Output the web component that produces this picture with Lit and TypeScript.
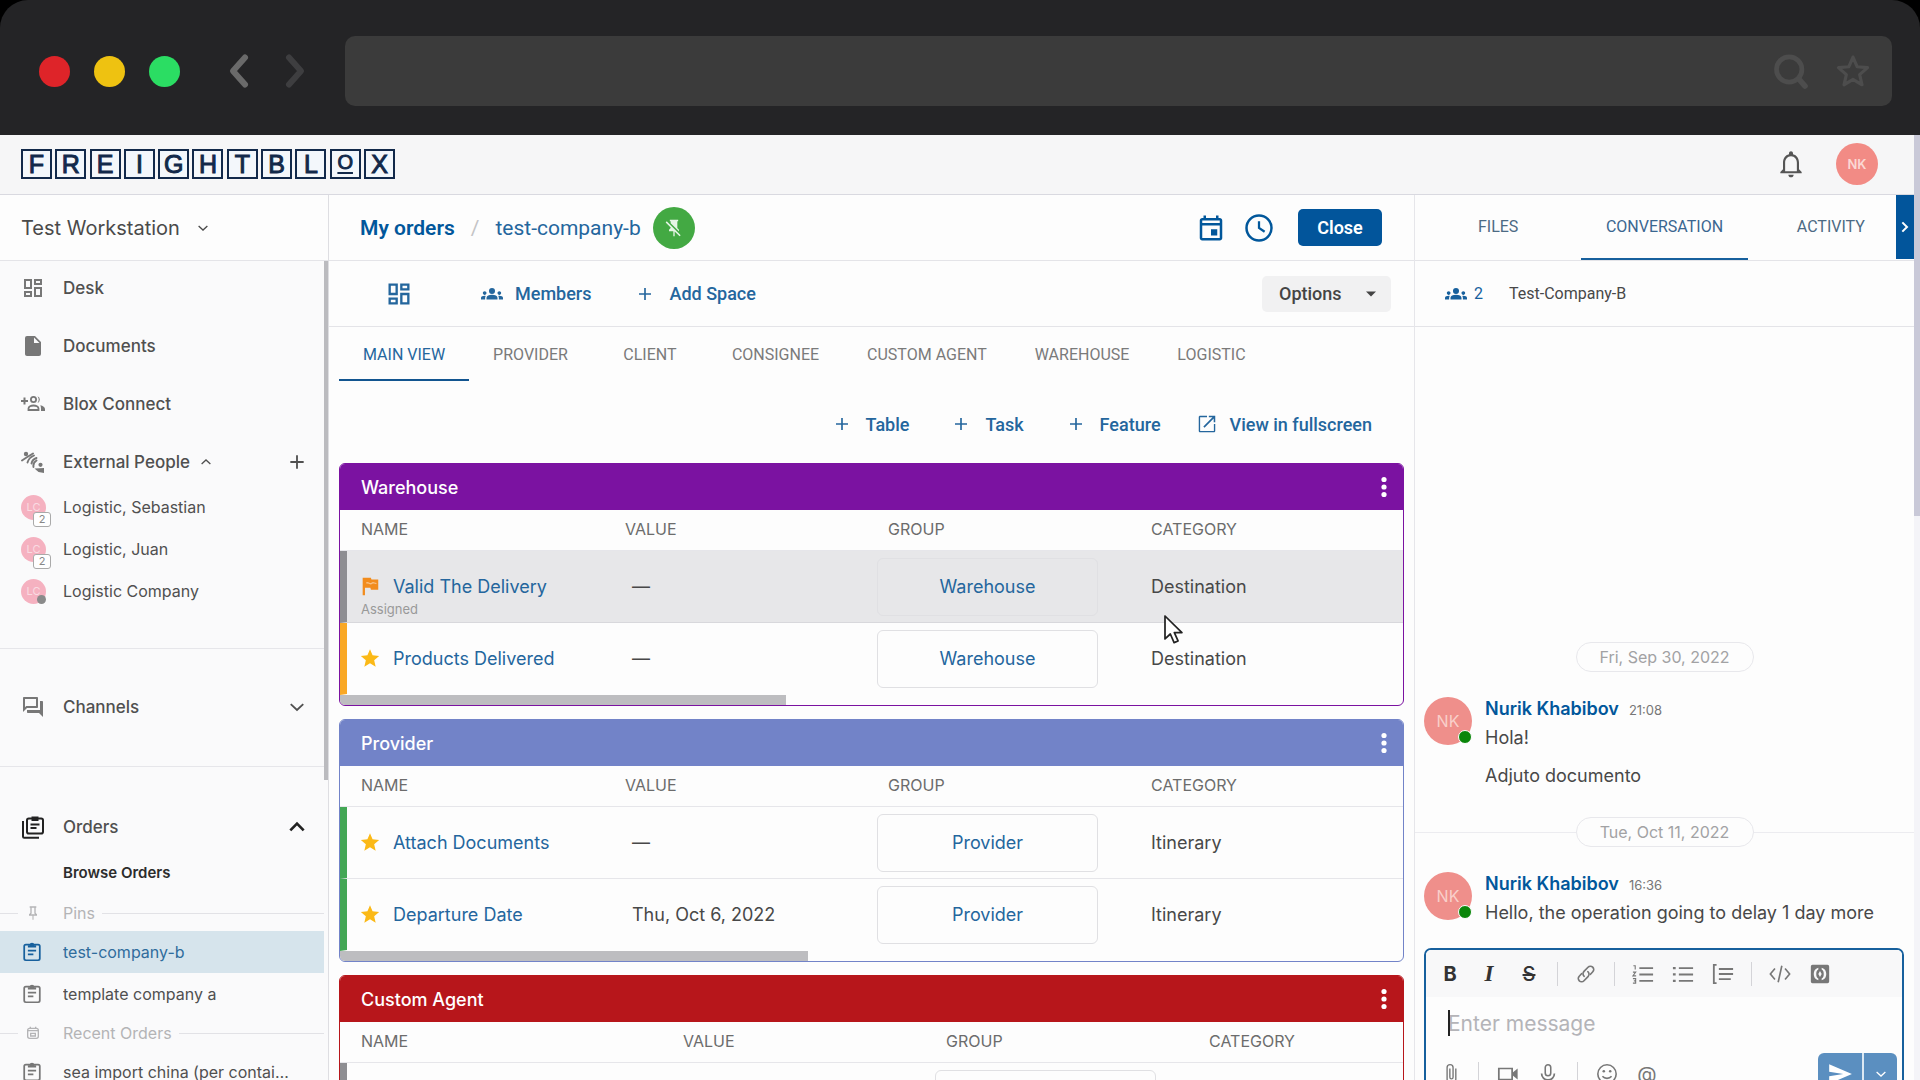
import { LitElement, html, svg, css, nothing, TemplateResult } from "lit";
import { customElement, property } from "lit/decorators.js";
import { classMap } from "lit/directives/class-map.js";

const shapes: Record<string, TemplateResult> = {
  back: svg`<path d="M16 3 8 12l8 9" fill="none" stroke="currentColor" stroke-width="4" stroke-linecap="round" stroke-linejoin="round"/>`,
  forward: svg`<path d="m8 3 8 9-8 9" fill="none" stroke="currentColor" stroke-width="4" stroke-linecap="round" stroke-linejoin="round"/>`,
  search: svg`<circle cx="11.500" cy="11" r="8" fill="none" stroke="currentColor" stroke-width="3"/><path d="m17.500 17 4 4.500" stroke="currentColor" stroke-width="3.500" stroke-linecap="round"/>`,
  starLine: svg`<path d="m12 3.200 2.600 6.100 6.600.6-5 4.400 1.500 6.400L12 17.300l-5.700 3.400 1.500-6.400-5-4.400 6.600-.6z" fill="none" stroke="currentColor" stroke-width="2" stroke-linejoin="round"/>`,
  bell: svg`<path d="M12 22c1.1 0 2-.9 2-2h-4c0 1.1.9 2 2 2zm6-6v-5c0-3.07-1.63-5.64-4.5-6.32V4c0-.83-.67-1.5-1.5-1.5s-1.5.67-1.5 1.5v.68C7.64 5.36 6 7.92 6 11v5l-2 2v1h16v-1l-2-2zm-1.600 1.400H7.600v-6.400c0-2.600 1.700-4.900 4.400-4.900s4.400 2.300 4.400 4.900v6.400z"/>`,
  down: svg`<path d="m4.500 8.500 7.500 7 7.500-7" fill="none" stroke="currentColor" stroke-width="2.200"/>`,
  up: svg`<path d="m4.500 15.500 7.500-7 7.500 7" fill="none" stroke="currentColor" stroke-width="2.200"/>`,
  upBold: svg`<path d="m4 16 8-8 8 8" fill="none" stroke="currentColor" stroke-width="3.200"/>`,
  right: svg`<path d="m8 5 7 7-7 7" fill="none" stroke="currentColor" stroke-width="3"/>`,
  caret: svg`<path d="m2 7 10 10L22 7z"/>`,
  plus: svg`<path d="M12 4v16M4 12h16" stroke="currentColor" stroke-width="2.200"/>`,
  dashboard: svg`<path d="M19 5v2h-4V5h4M9 5v6H5V5h4m10 8v6h-4v-6h4M9 17v2H5v-2h4M21 3h-8v6h8V3zM11 3H3v10h8V3zm10 8h-8v10h8V11zm-10 4H3v6h8v-6z"/>`,
  file: svg`<path d="M6 2a2 2 0 0 0-2 2v16c0 1.100.9 2 2 2h12a2 2 0 0 0 2-2V8l-6-6H6zm7 7V3.500L18.500 9H13z"/>`,
  addPeople: svg`<path d="M0 9h7M3.500 5.500v7" stroke="currentColor" stroke-width="2"/><circle cx="12.500" cy="7.500" r="2.600" fill="none" stroke="currentColor" stroke-width="1.800"/><path d="M7.500 18v-1.500c0-1.800 2.500-3 5-3s5 1.200 5 3V18z" fill="none" stroke="currentColor" stroke-width="1.800"/><path d="M16.500 4.300a3.500 3.500 0 0 1 0 6.600 5.500 5.500 0 0 0 0-6.600zM19.300 13.200c2.700.6 4.700 1.900 4.700 3.800v2h-4v-2.300c0-1.400-.3-2.500-.7-3.500z"/>`,
  external: svg`<circle cx="5" cy="4" r="2.200"/><path d="M1 10.500 5.500 7.500 12 3.500M6.500 12.500c1-3.500 3-5.500 6.500-7M10.500 13.500c.5-2.500 2-4.500 5-5.500M12.500 17c-.5-2.800.5-5 3-6.500" fill="none" stroke="currentColor" stroke-width="1.900" stroke-linecap="round"/><circle cx="19.500" cy="14.800" r="2.100"/><path d="M13.500 18.500 23 18v5l-5.500-1z"/>`,
  forum: svg`<path d="M15 4v7H5.170L4 12.170V4h11m1-2H3c-.55 0-1 .45-1 1v14l4-4h10c.55 0 1-.45 1-1V3c0-.55-.45-1-1-1zm5 4h-2v9H6v2c0 .55.450 1 1 1h11l4 4V7c0-.55-.45-1-1-1z"/>`,
  orders: svg`<rect x="6" y="3.500" width="16" height="15" rx="1.800" fill="none" stroke="currentColor" stroke-width="2"/><path d="M10.500 1.500h7V6h-7z"/><path d="M9.500 9.500h9M9.500 13h6M2 6v15.500c0 .8.400 1.200 1.200 1.200H18" fill="none" stroke="currentColor" stroke-width="2"/>`,
  clipboard: svg`<rect x="3.500" y="4" width="17" height="17" rx="1.800" fill="none" stroke="currentColor" stroke-width="1.900"/><path d="M7.500 7V4.500h2a2.500 2.500 0 0 1 5 0h2V7z"/><path d="M7.500 10.500h9M7.500 14.500h6" stroke="currentColor" stroke-width="1.900"/>`,
  calendarSmall: svg`<rect x="4" y="5" width="16" height="15" rx="3" fill="none" stroke="currentColor" stroke-width="2"/><path d="M4 8.500h16M8 2.500V6M16 2.500V6M8.500 12.500h7v4h-7z" fill="none" stroke="currentColor" stroke-width="2"/>`,
  pin: svg`<path d="M16 12V4h1V2H7v2h1v8l-2 2v2h5.200v6h1.600v-6H18v-2l-2-2M8.800 14l1.200-1.200V4h4v8.800l1.200 1.200H8.800z"/>`,
  pinOff: svg`<path d="M2 5.270 3.280 4 20 20.720 18.730 22l-5.930-5.930V22h-1.600v-6H6v-2l2-2v-.73l-6-6M16 12l2 2v2h-.18L8 6.180V4H7V2h10v2h-1v8z"/>`,
  event: svg`<path d="M19 4h-1V2h-2v2H8V2H6v2H5c-1.110 0-1.990.9-1.990 2L3 20c0 1.100.89 2 2 2h14c1.100 0 2-.9 2-2V6c0-1.100-.9-2-2-2zm0 16H5V10h14v10zm0-12H5V6h14v2zm-7 5h5v5h-5z"/>`,
  clock: svg`<circle cx="12" cy="12" r="10" fill="none" stroke="currentColor" stroke-width="2"/><path d="M12 6.500V12l4.500 3" fill="none" stroke="currentColor" stroke-width="1.800"/>`,
  groups: svg`<path d="M12 12.750c1.630 0 3.070.39 4.240.9 1.080.48 1.760 1.560 1.760 2.730V18H6v-1.610c0-1.180.68-2.260 1.760-2.730 1.170-.52 2.610-.91 4.240-.91zM4 13c1.100 0 2-.9 2-2s-.9-2-2-2-2 .9-2 2 .9 2 2 2zm1.130 1.100C4.760 14.040 4.390 14 4 14c-.99 0-1.930.21-2.780.58C.48 14.900 0 15.620 0 16.430V18h4.500v-1.610c0-.83.230-1.610.63-2.290zM20 13c1.100 0 2-.9 2-2s-.9-2-2-2-2 .9-2 2 .9 2 2 2zm4 3.430c0-.81-.48-1.530-1.220-1.850-.85-.37-1.790-.58-2.780-.58-.39 0-.76.04-1.130.1.400.68.630 1.460.63 2.290V18H24v-1.570zM12 5.500a3.300 3.300 0 1 1 0 6.600 3.300 3.300 0 0 1 0-6.600z"/>`,
  open: svg`<path d="M19.500 19.500h-15v-15H12V3H4.500C3.700 3 3 3.700 3 4.500v15c0 .8.700 1.500 1.500 1.500h15c.8 0 1.500-.7 1.500-1.500V12h-1.500v7.500zM14 3v1.700h4L8 14.700 9.300 16l10-10v4H21V3h-7z"/>`,
  flag: svg`<path d="M4 3h9l.6 2H21v11h-8l-.6-2H6.500v8H4z"/><path d="M8 9c2-2 4 2 6 0s3 1 5 0" fill="none" stroke="#fff" stroke-opacity=".45" stroke-width="1.500"/>`,
  star: svg`<path d="M12 17.770 18.180 21.500l-1.640-7.030L22 9.740l-7.190-.61L12 2.500 9.190 9.130 2 9.740l5.460 4.730L5.820 21.500z"/>`,
  kebab: svg`<circle cx="12" cy="4.500" r="2.600"/><circle cx="12" cy="12" r="2.600"/><circle cx="12" cy="19.500" r="2.600"/>`,
  link: svg`<g fill="none" stroke="currentColor" stroke-width="1.800" stroke-linecap="round"><path d="M10 14.500c-1.700-1.500-1.700-3.700-.2-5.300l4.400-4.600a3.600 3.600 0 0 1 5.200 5l-2.500 2.700"/><path d="M14 9.500c1.700 1.500 1.700 3.700.2 5.300l-4.400 4.600a3.600 3.600 0 0 1-5.200-5l2.500-2.700"/></g>`,
  ordered: svg`<path d="M8 5.500h15M8 12.500h15M8 19.500h15" stroke="currentColor" stroke-width="2"/><path d="M1.500 3h2v4M1 10h3l-3 4h3.500M1 17h3v5H1M2 19.500h2" fill="none" stroke="currentColor" stroke-width="1.200"/>`,
  bullets: svg`<path d="M7.500 5.500h15.500M7.500 12.500h15.500M7.500 19.500h15.500" stroke="currentColor" stroke-width="2"/><path d="M1 5.500h3M1 12.500h3M1 19.500h3" stroke="currentColor" stroke-width="2.400"/>`,
  quote: svg`<path d="M5 2H2v20h3M7.500 6.500H23M7.500 12H23M7.500 17.500h13" fill="none" stroke="currentColor" stroke-width="2"/>`,
  code: svg`<path d="m6.500 6-5 6 5 6M17.500 6l5 6-5 6M14 3l-4 18" fill="none" stroke="currentColor" stroke-width="1.800"/>`,
  block: svg`<path fill-rule="evenodd" d="M3 1h18a2 2 0 0 1 2 2v18a2 2 0 0 1-2 2H3a2 2 0 0 1-2-2V3a2 2 0 0 1 2-2zm7 3.500C6 5.500 4.500 8.500 4.500 12S6 18.500 10 19.500v-2.200C8 16.500 7.500 14.500 7.500 12S8 7.500 10 6.700zm4 0v2.200c2 .8 2.500 2.800 2.500 5.300s-.5 4.500-2.500 5.300v2.200c4-1 5.500-4 5.500-7.500S18 5.500 14 4.500zM12 8.500l-2 3.500 2 3.500 2-3.500z"/>`,
  clip: svg`<path d="M16.500 6v11.500a4 4 0 0 1-8 0V5a2.500 2.500 0 0 1 5 0v10.500a1 1 0 0 1-2 0V6H10v9.500a2.500 2.500 0 0 0 5 0V5a4 4 0 0 0-8 0v12.500a5.500 5.500 0 0 0 11 0V6h-1.500z"/>`,
  video: svg`<path d="M2 6h14.500v12H2z" fill="none" stroke="currentColor" stroke-width="1.900"/><path d="m16.500 11 6-5v12l-6-5z"/>`,
  mic: svg`<rect x="9" y="2" width="6" height="12" rx="3" fill="none" stroke="currentColor" stroke-width="1.700"/><path d="M5 11.500a7 7 0 0 0 14 0M12 18.500V22" fill="none" stroke="currentColor" stroke-width="1.900"/>`,
  smile: svg`<circle cx="12" cy="12" r="10" fill="none" stroke="currentColor" stroke-width="1.700"/><circle cx="8.500" cy="9" r="1.400"/><circle cx="15.500" cy="9" r="1.400"/><path d="M7 14.500c2.500 3 7.500 3 10 0" fill="none" stroke="currentColor" stroke-width="1.700"/>`,
  send: svg`<path d="M2 21 23 12 2 3v7l13 2-13 2z"/>`,
  pointer: svg`<path d="M4.500 1.500v17.200l4-3.700 2.800 6.500 3-1.300-2.800-6.300h5.700z" fill="#fff" stroke="#222" stroke-width="1.300" stroke-linejoin="round"/>`,
};

const icon = (name: string, size = 24) => svg`
  <svg class="icon" viewBox="0 0 24 24" width=${size} height=${size} fill="currentColor" aria-hidden="true">${shapes[name]}</svg>`;

const base = css`
  * { box-sizing: border-box; }
  button, input, textarea { font: inherit; color: inherit; margin: 0; }
  button { border: 0; background: none; padding: 0; cursor: pointer; }
  a { color: inherit; text-decoration: none; }
  .icon { display: block; flex: none; }
`;

interface Row { stripe: string; icon?: string; tone?: string; name?: string; note?: string; value?: string; group?: string; category?: string; hover?: boolean; }
interface Board { title: string; tone: string; thumb: number; wide?: boolean; rows: Row[]; }

const boards: Board[] = [
  { title: "Warehouse", tone: "purple", thumb: 42, rows: [
    { icon: "flag", tone: "orange", stripe: "grey", name: "Valid The Delivery", note: "Assigned", value: "—", group: "Warehouse", category: "Destination", hover: true },
    { icon: "star", tone: "gold", stripe: "amber", name: "Products Delivered", value: "—", group: "Warehouse", category: "Destination" },
  ] },
  { title: "Provider", tone: "indigo", thumb: 44, rows: [
    { icon: "star", tone: "gold", stripe: "green", name: "Attach Documents", value: "—", group: "Provider", category: "Itinerary" },
    { icon: "star", tone: "gold", stripe: "green", name: "Departure Date", value: "Thu, Oct 6, 2022", group: "Provider", category: "Itinerary" },
  ] },
  { title: "Custom Agent", tone: "red", thumb: 40, wide: true, rows: [{ stripe: "grey" }] },
];

@customElement("order-board")
class OrderBoard extends LitElement {
  @property({ attribute: false }) board!: Board;

  static styles = [base, css`
    :host { display: block; }
    .card { border: 1px solid var(--tone); border-radius: 6px; overflow: hidden; background: #fdfdfd; }
    .purple { --tone: #7b12a1; }
    .indigo { --tone: #7283c8; }
    .red { --tone: #b7161b; }
    .head { display: flex; align-items: center; justify-content: space-between; height: 46px; padding: 0 9px 0 21px; background: var(--tone); color: #fff; }
    h2 { margin: 0; font-size: 18px; font-weight: 500; }
    .menu { display: grid; place-items: center; width: 22px; height: 32px; }
    table { width: 100%; border-collapse: separate; border-spacing: 0; table-layout: fixed; }
    .c-name { width: 264px; }
    .wide .c-name { width: 322px; }
    .c-mid { width: 263px; }
    th { height: 41px; padding: 0 0 2px 21px; text-align: left; font-size: 16px; font-weight: 400; color: #6c6c6c; border-bottom: 1px solid #e6e6ea; }
    td { height: 72px; padding: 0 0 0 21px; font-size: 18px; color: #484848; border-bottom: 1px solid #e6e6ea; }
    tr:last-child td { border-bottom-color: transparent; }
    .hover td { background: #e7e7e9; border-bottom-color: #d8d8dc; }
    .first { padding: 0 0 0 12px; border-left: 7px solid var(--stripe); }
    .s-grey { --stripe: #8e8e92; }
    .s-amber { --stripe: #f9a825; }
    .s-green { --stripe: #43a755; }
    .name { display: grid; grid-template-columns: 22px 1fr; column-gap: 12px; grid-template-rows: 28px 18px; align-items: center; padding: 21px 0 4px; color: #24669d; }
    .note { grid-column: 1 / 3; padding-left: 2px; font-size: 13px; color: #999; }
    .orange { color: #f28c1d; }
    .gold { color: #fbb917; }
    .value { padding-left: 28px; }
    .pick { padding: 0 32px 0 10px; }
    .group { display: block; width: 100%; height: 58px; border: 1px solid #e0e0e3; border-radius: 6px; color: #24669d; font-size: 18px; }
    .track { height: 10px; }
    .thumb { height: 100%; background: #bdbdc0; }
  `];

  render() {
    const b = this.board;
    return html`
      <section class="card ${classMap({ [b.tone]: true, wide: !!b.wide })}">
        <header class="head"><h2>${b.title}</h2><button class="menu" aria-label="${b.title} menu">${icon("kebab", 24)}</button></header>
        <table>
          <colgroup><col class="c-name" /><col class="c-mid" /><col class="c-mid" /><col /></colgroup>
          <thead><tr><th>NAME</th><th>VALUE</th><th>GROUP</th><th>CATEGORY</th></tr></thead>
          <tbody>
            ${b.rows.map((r) => html`
              <tr class=${classMap({ hover: !!r.hover })}>
                <td class="first s-${r.stripe}">
                  ${r.name ? html`<div class="name"><span class=${r.tone ?? ""}>${icon(r.icon ?? "star", 22)}</span><a href="#">${r.name}</a>${r.note ? html`<span class="note">${r.note}</span>` : nothing}</div>` : nothing}
                </td>
                <td class="value">${r.value}</td>
                <td class="pick"><button class="group">${r.group}</button></td>
                <td>${r.category}</td>
              </tr>`)}
          </tbody>
        </table>
        <div class="track"><div class="thumb" style="width:${b.thumb}%"></div></div>
      </section>`;
  }
}

@customElement("side-nav")
class SideNav extends LitElement {
  static styles = [base, css`
    :host { display: flex; flex-direction: column; min-height: 0; background: #fafafb; color: #505050; }
    .station { display: flex; align-items: center; gap: 16px; width: 100%; height: 66px; flex: none; padding: 0 21px; border-bottom: 1px solid #e4e4e8; background: #fdfdfd; font-size: 20px; color: #4a4a4a; }
    .body { display: flex; flex: 1; min-height: 0; }
    .list { flex: 1; min-width: 0; overflow: hidden; }
    .bar { width: 4px; height: 519px; background: #bbbbbf; }
    .top { display: grid; gap: 12px; padding: 4px 0 1px; }
    .item { display: grid; grid-template-columns: 42px 1fr auto; align-items: center; height: 46px; padding: 0 17px 0 21px; font-size: 17px; font-weight: 500; }
    .label { display: flex; align-items: center; gap: 9px; }
    .side { display: grid; place-items: center; width: 20px; height: 20px; }
    .sub { display: grid; grid-template-columns: 42px 1fr; align-items: center; height: 42px; padding: 0 34px 0 21px; font-size: 16px; }
    .ellipsis { overflow: hidden; text-overflow: ellipsis; white-space: nowrap; }
    .avatar { position: relative; display: grid; place-items: center; width: 25px; height: 25px; border-radius: 50%; background: #f5b1c0; color: #f9dbe2; font-size: 11px; }
    .count { position: absolute; left: 12px; top: 17px; width: 18px; height: 15px; border: 1px solid #aaa; border-radius: 3px; background: #fff; color: #888; font-size: 11px; line-height: 13px; text-align: center; }
    .dot { position: absolute; left: 16px; top: 16px; width: 9px; height: 9px; border-radius: 50%; background: #8a8a8a; }
    .people { padding-bottom: 36px; }
    .section { border-top: 1px solid #e6e6ea; padding: 35px 0 36px; }
    .orders { padding-top: 37px; }
    .dark { color: #222; }
    .browse { height: 45px; display: flex; align-items: center; padding-left: 63px; font-size: 15px; font-weight: 600; color: #2c2c2c; }
    .rule { display: grid; grid-template-columns: 18px 16px auto 1fr; align-items: center; height: 36px; column-gap: 7px; font-size: 16px; color: #b4b4b6; }
    .rule .line { height: 1px; background: #e2e2e6; }
    .rule .title { margin-left: 15px; }
    .active { background: #d6e4ec; color: #2f6c9c; }
    .grey { color: #777; }
    .active .grey { color: #17609d; }
  `];

  private sub(label: string, active = false) {
    return html`<a href="#" class="sub ${classMap({ active })}"><span class="grey">${icon("clipboard", 22)}</span><span class="ellipsis">${label}</span></a>`;
  }

  private rule(name: string, label: string) {
    return html`<div class="rule"><span class="line"></span>${icon(name, 16)}<span class="title">${label}</span><span class="line"></span></div>`;
  }

  render() {
    return html`
      <button class="station">Test Workstation ${icon("down", 14)}</button>
      <div class="body">
        <nav class="list">
          <div class="top">
            <a href="#" class="item"><span class="grey">${icon("dashboard", 24)}</span>Desk</a>
            <a href="#" class="item"><span class="grey">${icon("file", 24)}</span>Documents</a>
            <a href="#" class="item"><span class="grey">${icon("addPeople", 24)}</span>Blox Connect</a>
            <div class="item"><span class="grey">${icon("external", 24)}</span><span class="label">External People ${icon("up", 14)}</span><button class="side" aria-label="Add person">${icon("plus", 20)}</button></div>
          </div>
          <div class="people">
            ${["Logistic, Sebastian", "Logistic, Juan", "Logistic Company"].map((p, i) => html`
              <a href="#" class="sub"><span class="avatar">LC${i < 2 ? html`<span class="count">2</span>` : html`<span class="dot"></span>`}</span><span>${p}</span></a>`)}
          </div>
          <section class="section"><div class="item"><span class="grey">${icon("forum", 24)}</span>Channels<button class="side" aria-label="Expand channels">${icon("down", 20)}</button></div></section>
          <section class="section orders">
            <div class="item"><span class="dark">${icon("orders", 24)}</span>Orders<button class="side dark" aria-label="Collapse orders">${icon("upBold", 20)}</button></div>
            <a href="#" class="browse">Browse Orders</a>
            ${this.rule("pin", "Pins")}
            ${this.sub("test-company-b", true)}
            ${this.sub("template company a")}
            ${this.rule("calendarSmall", "Recent Orders")}
            ${this.sub("sea import china (per container)")}
          </section>
        </nav>
        <div class="bar"></div>
      </div>`;
  }
}

@customElement("order-view")
class OrderView extends LitElement {
  static styles = [base, css`
    :host { display: block; min-width: 0; overflow: hidden; border-left: 1px solid #dedee2; border-right: 1px solid #e6e6ea; background: #fdfdfd; color: #24669d; }
    .bar, .commands, .tabs, .actions { font-family: Roboto, Inter, sans-serif; }
    .bar { display: flex; align-items: center; height: 66px; border-bottom: 1px solid #e4e4e8; padding: 0 32px 0 31px; font-size: 21px; }
    .parent { font-weight: 600; color: #01579b; }
    .slash { padding: 0 16px; color: #c4c4c6; }
    .pin { display: grid; place-items: center; width: 42px; height: 42px; margin-left: 12px; border-radius: 50%; background: #43a943; color: #e6f5e6; }
    .tools { display: flex; align-items: center; gap: 18px; margin-left: auto; color: #01579b; }
    .close { width: 84px; height: 37px; margin-left: 6px; border-radius: 5px; background: #02559b; color: #fff; font-size: 18px; font-weight: 600; }
    .commands { display: flex; align-items: center; height: 66px; border-bottom: 1px solid #e4e4e8; padding: 0 23px 0 56px; font-size: 18px; font-weight: 500; }
    .command { display: flex; align-items: center; gap: 12px; }
    .members { margin-left: 68px; }
    .space { margin-left: 45px; gap: 15px; }
    .options { display: flex; align-items: center; justify-content: space-between; width: 129px; height: 36px; margin-left: auto; padding: 0 14px 0 17px; border-radius: 5px; background: #f1f1f2; color: #444; }
    .tabs { display: flex; height: 54px; padding: 0 10px; font-size: 16px; color: #7a7a7a; }
    .tab { min-width: 116px; padding: 2px 24px 0; border-bottom: 2px solid transparent; }
    .current { color: #24669d; border-color: #125590; }
    .actions { display: flex; align-items: center; justify-content: flex-end; gap: 43px; height: 82px; padding: 4px 42px 0 0; font-size: 18px; font-weight: 500; }
    .actions .command { gap: 15px; }
    .actions .full { gap: 12px; margin-left: -8px; }
    .boards { display: grid; gap: 13px; padding: 0 10px; }
  `];

  render() {
    const tabs = ["MAIN VIEW", "PROVIDER", "CLIENT", "CONSIGNEE", "CUSTOM AGENT", "WAREHOUSE", "LOGISTIC"];
    return html`
      <header class="bar">
        <a href="#" class="parent">My orders</a><span class="slash">/</span><a href="#">test-company-b</a>
        <button class="pin" aria-label="Unpin order">${icon("pinOff", 20)}</button>
        <div class="tools"><button aria-label="Calendar">${icon("event", 30)}</button><button aria-label="History">${icon("clock", 30)}</button><button class="close">Close</button></div>
      </header>
      <div class="commands">
        <button aria-label="Dashboard">${icon("dashboard", 28)}</button>
        <button class="command members">${icon("groups", 22)}Members</button>
        <button class="command space">${icon("plus", 18)}Add Space</button>
        <button class="options">Options ${icon("caret", 12)}</button>
      </div>
      <nav class="tabs">${tabs.map((t, i) => html`<button class="tab ${classMap({ current: i === 0 })}">${t}</button>`)}</nav>
      <div class="actions">
        ${["Table", "Task", "Feature"].map((t) => html`<button class="command">${icon("plus", 18)}${t}</button>`)}
        <button class="command full">${icon("open", 22)}View in fullscreen</button>
      </div>
      <div class="boards">${boards.map((b) => html`<order-board .board=${b}></order-board>`)}</div>`;
  }
}

@customElement("chat-panel")
class ChatPanel extends LitElement {
  static styles = [base, css`
    :host { display: flex; flex-direction: column; min-height: 0; background: #fdfdfd; color: #484848; }
    .tabs, .about { font-family: Roboto, Inter, sans-serif; }
    .tabs { position: relative; display: grid; grid-template-columns: repeat(3, 1fr); flex: none; height: 66px; border-bottom: 1px solid #e4e4e8; font-size: 16px; color: #4c6a84; }
    .tab { border-bottom: 2px solid transparent; }
    .current { border-color: #17609d; color: #3a6690; }
    .expand { position: absolute; right: 0; top: 0; display: grid; place-items: center; width: 18px; height: 64px; background: #02559b; color: #fff; }
    .about { display: flex; align-items: center; flex: none; height: 66px; border-bottom: 1px solid #e4e4e8; padding-left: 30px; font-size: 16px; }
    .count { display: flex; align-items: center; gap: 7px; width: 64px; color: #17609d; }
    .feed { display: flex; flex-direction: column; justify-content: flex-end; flex: 1; min-height: 0; overflow: hidden; font-size: 18px; }
    .day { display: grid; grid-template-columns: 1fr 178px 1fr; align-items: center; font-size: 16px; color: #a2a2a4; }
    .day .line { height: 1px; background: #ececf0; }
    .day.plain .line { background: none; }
    .pill { height: 30px; border: 1px solid #e8e8ec; border-radius: 15px; line-height: 28px; text-align: center; }
    .message { display: grid; grid-template-columns: 48px 1fr; column-gap: 13px; padding: 24px 0 26px 9px; }
    .avatar { position: relative; display: grid; place-items: center; width: 48px; height: 48px; margin-top: 1px; border-radius: 50%; background: #ef8f8b; color: #f9cfca; font-size: 16px; }
    .online { position: absolute; right: 0; bottom: 1px; width: 14px; height: 14px; border: 1px solid #fff; border-radius: 50%; background: #0a860a; }
    .who { display: flex; align-items: baseline; gap: 10px; line-height: 26px; }
    .who strong { font-weight: 600; color: #01579b; }
    time { font-size: 13px; color: #777; }
    p { margin: 0; line-height: 30px; }
    p + p { margin-top: 8px; }
    .last { padding-bottom: 20px; }
    .editor { flex: none; margin: 0 10px 4px 9px; border: 2px solid #17609d; border-radius: 7px; overflow: hidden; }
    .format { display: flex; align-items: center; height: 47px; padding: 0 14px; background: #f8f8f9; color: #777; }
    .tool { display: grid; place-items: center; width: 40px; height: 40px; font-size: 20px; }
    .tool:first-child { width: 20px; margin-right: 9px; }
    .format .tool:nth-child(-n+3) { color: #333; }
    .sep { width: 1px; height: 24px; margin: 0 9px; background: #d4d4d8; }
    .format .sep { margin: 0 8px; }
    .bold { font-weight: 700; }
    .italic { font-family: "Liberation Serif", serif; font-style: italic; font-size: 23px; font-weight: 700; }
    .strike { text-decoration: line-through; font-weight: 500; }
    textarea { display: block; width: 100%; height: 54px; padding: 13px 22px; border: 0; background: none; resize: none; outline: 0; font-size: 21px; line-height: 28px; }
    textarea::placeholder { color: #b4b4b8; opacity: 1; }
    .entry { position: relative; }
    .caret { position: absolute; left: 22px; top: 13px; width: 2px; height: 26px; background: #222; }
    .foot { display: flex; align-items: center; height: 51px; padding: 0 5px 5px 14px; color: #777; }
    .sendbox { display: flex; margin-left: auto; height: 42px; border-radius: 6px; overflow: hidden; background: #5b8fc0; color: #fff; }
    .send { display: grid; place-items: center; width: 44px; }
    .more { display: grid; place-items: center; width: 35px; border-left: 2px solid #dde9f3; }
  `];

  render() {
    const tool = (name: string, label: string, size = 22) => html`<button class="tool" aria-label=${label}>${icon(name, size)}</button>`;
    return html`
      <nav class="tabs">
        <button class="tab">FILES</button><button class="tab current">CONVERSATION</button><button class="tab">ACTIVITY</button>
        <button class="expand" aria-label="Collapse panel">${icon("right", 16)}</button>
      </nav>
      <div class="about"><span class="count">${icon("groups", 22)}2</span><span>Test-Company-B</span></div>
      <div class="feed">
        <div class="day plain"><span class="line"></span><span class="pill">Fri, Sep 30, 2022</span><span class="line"></span></div>
        <article class="message">
          <span class="avatar">NK<span class="online"></span></span>
          <div><div class="who"><strong>Nurik Khabibov</strong><time>21:08</time></div><p>Hola!</p><p>Adjuto documento</p></div>
        </article>
        <div class="day"><span class="line"></span><span class="pill">Tue, Oct 11, 2022</span><span class="line"></span></div>
        <article class="message last">
          <span class="avatar">NK<span class="online"></span></span>
          <div><div class="who"><strong>Nurik Khabibov</strong><time>16:36</time></div><p>Hello, the operation going to delay 1 day more</p></div>
        </article>
      </div>
      <div class="editor">
        <div class="format">
          <button class="tool bold">B</button><button class="tool italic">I</button><button class="tool strike">S</button>
          <span class="sep"></span>${tool("link", "Link")}<span class="sep"></span>
          ${tool("ordered", "Numbered list")}${tool("bullets", "Bulleted list")}${tool("quote", "Quote")}
          <span class="sep"></span>${tool("code", "Code")}${tool("block", "Code block", 20)}
        </div>
        <div class="entry"><textarea aria-label="Message" placeholder="Enter message"></textarea><span class="caret"></span></div>
        <div class="foot">
          ${tool("clip", "Attach file")}<span class="sep"></span>${tool("video", "Video")}${tool("mic", "Audio")}<span class="sep"></span>
          ${tool("smile", "Emoji")}<button class="tool">@</button>
          <div class="sendbox"><button class="send" aria-label="Send">${icon("send", 26)}</button><button class="more" aria-label="Send options">${icon("down", 14)}</button></div>
        </div>
      </div>`;
  }
}

@customElement("app-root")
class AppRoot extends LitElement {
  static styles = [base, css`
    :host { display: block; height: 100vh; overflow: hidden; position: relative; background: #000; font-family: Inter, Roboto, sans-serif; }
    .chrome { display: flex; align-items: center; height: 135px; padding: 7px 28px 0 39px; border-radius: 28px 28px 0 0; background: #242426; }
    .lights { display: flex; gap: 24px; }
    .light { width: 31px; height: 31px; border-radius: 50%; }
    .red { background: #de2429; }
    .yellow { background: #eec211; }
    .green { background: #2bdd63; }
    .arrows { display: flex; gap: 20px; margin: 0 32px 0 41px; color: #6a6a6a; }
    .off { color: #3e3e40; }
    .address { display: flex; align-items: center; flex: 1; height: 70px; border-radius: 10px; background: #3b3b3b; color: #4d4d4d; padding-right: 20px; gap: 25px; }
    .url { flex: 1; height: 100%; border: 0; background: none; outline: 0; padding: 0 20px; }
    .page { display: grid; grid-template-columns: 1fr 6px; height: calc(100vh - 107px); background: #fdfdfd; }
    .site { display: grid; grid-template-rows: 60px 1fr; min-width: 0; min-height: 0; }
    .top { display: flex; align-items: center; padding: 0 36px 2px 21px; border-bottom: 1px solid #d9d9e0; background: #f6f6f7; color: #555; }
    .logo { display: flex; justify-content: space-between; width: 374px; margin-right: auto; color: #12294a; font-family: "Liberation Sans", sans-serif; font-size: 25px; line-height: 26px; }
    .tile { width: 31px; height: 30px; border: 2px solid #12294a; text-align: center; font-weight: 400; -webkit-text-stroke: 1px #12294a; background: #f3f7fb; }
    .small { font-size: 20px; line-height: 22px; text-decoration: underline; text-underline-offset: 3px; }
    .me { display: grid; place-items: center; width: 42px; height: 42px; margin-left: 29px; border-radius: 50%; background: #f28b85; color: #fbd8d4; font-size: 13px; font-weight: 600; }
    .columns { display: grid; grid-template-columns: 328px minmax(0, 1fr) 499px; min-height: 0; }
    .scroll { background: #f4f4f8; }
    .thumb { height: 381px; background: #c9c9d8; }
    .pointer { position: absolute; left: 1159px; top: 614px; }
  `];

  render() {
    return html`
      <header class="chrome">
        <div class="lights"><span class="light red"></span><span class="light yellow"></span><span class="light green"></span></div>
        <div class="arrows"><button aria-label="Back">${icon("back", 36)}</button><button class="off" aria-label="Forward">${icon("forward", 36)}</button></div>
        <div class="address"><input class="url" aria-label="Address" />${icon("search", 38)}${icon("starLine", 38)}</div>
      </header>
      <div class="page">
        <div class="site">
          <header class="top">
            <a href="#" class="logo" aria-label="FREIGHTBLOX">${[..."FREIGHTBLOX"].map((c, i) => html`<span class="tile ${classMap({ small: i === 9 })}">${c}</span>`)}</a>
            <button aria-label="Notifications">${icon("bell", 32)}</button>
            <button class="me">NK</button>
          </header>
          <div class="columns"><side-nav></side-nav><order-view></order-view><chat-panel></chat-panel></div>
        </div>
        <div class="scroll"><div class="thumb"></div></div>
      </div>
      <div class="pointer">${icon("pointer", 32)}</div>`;
  }
}
